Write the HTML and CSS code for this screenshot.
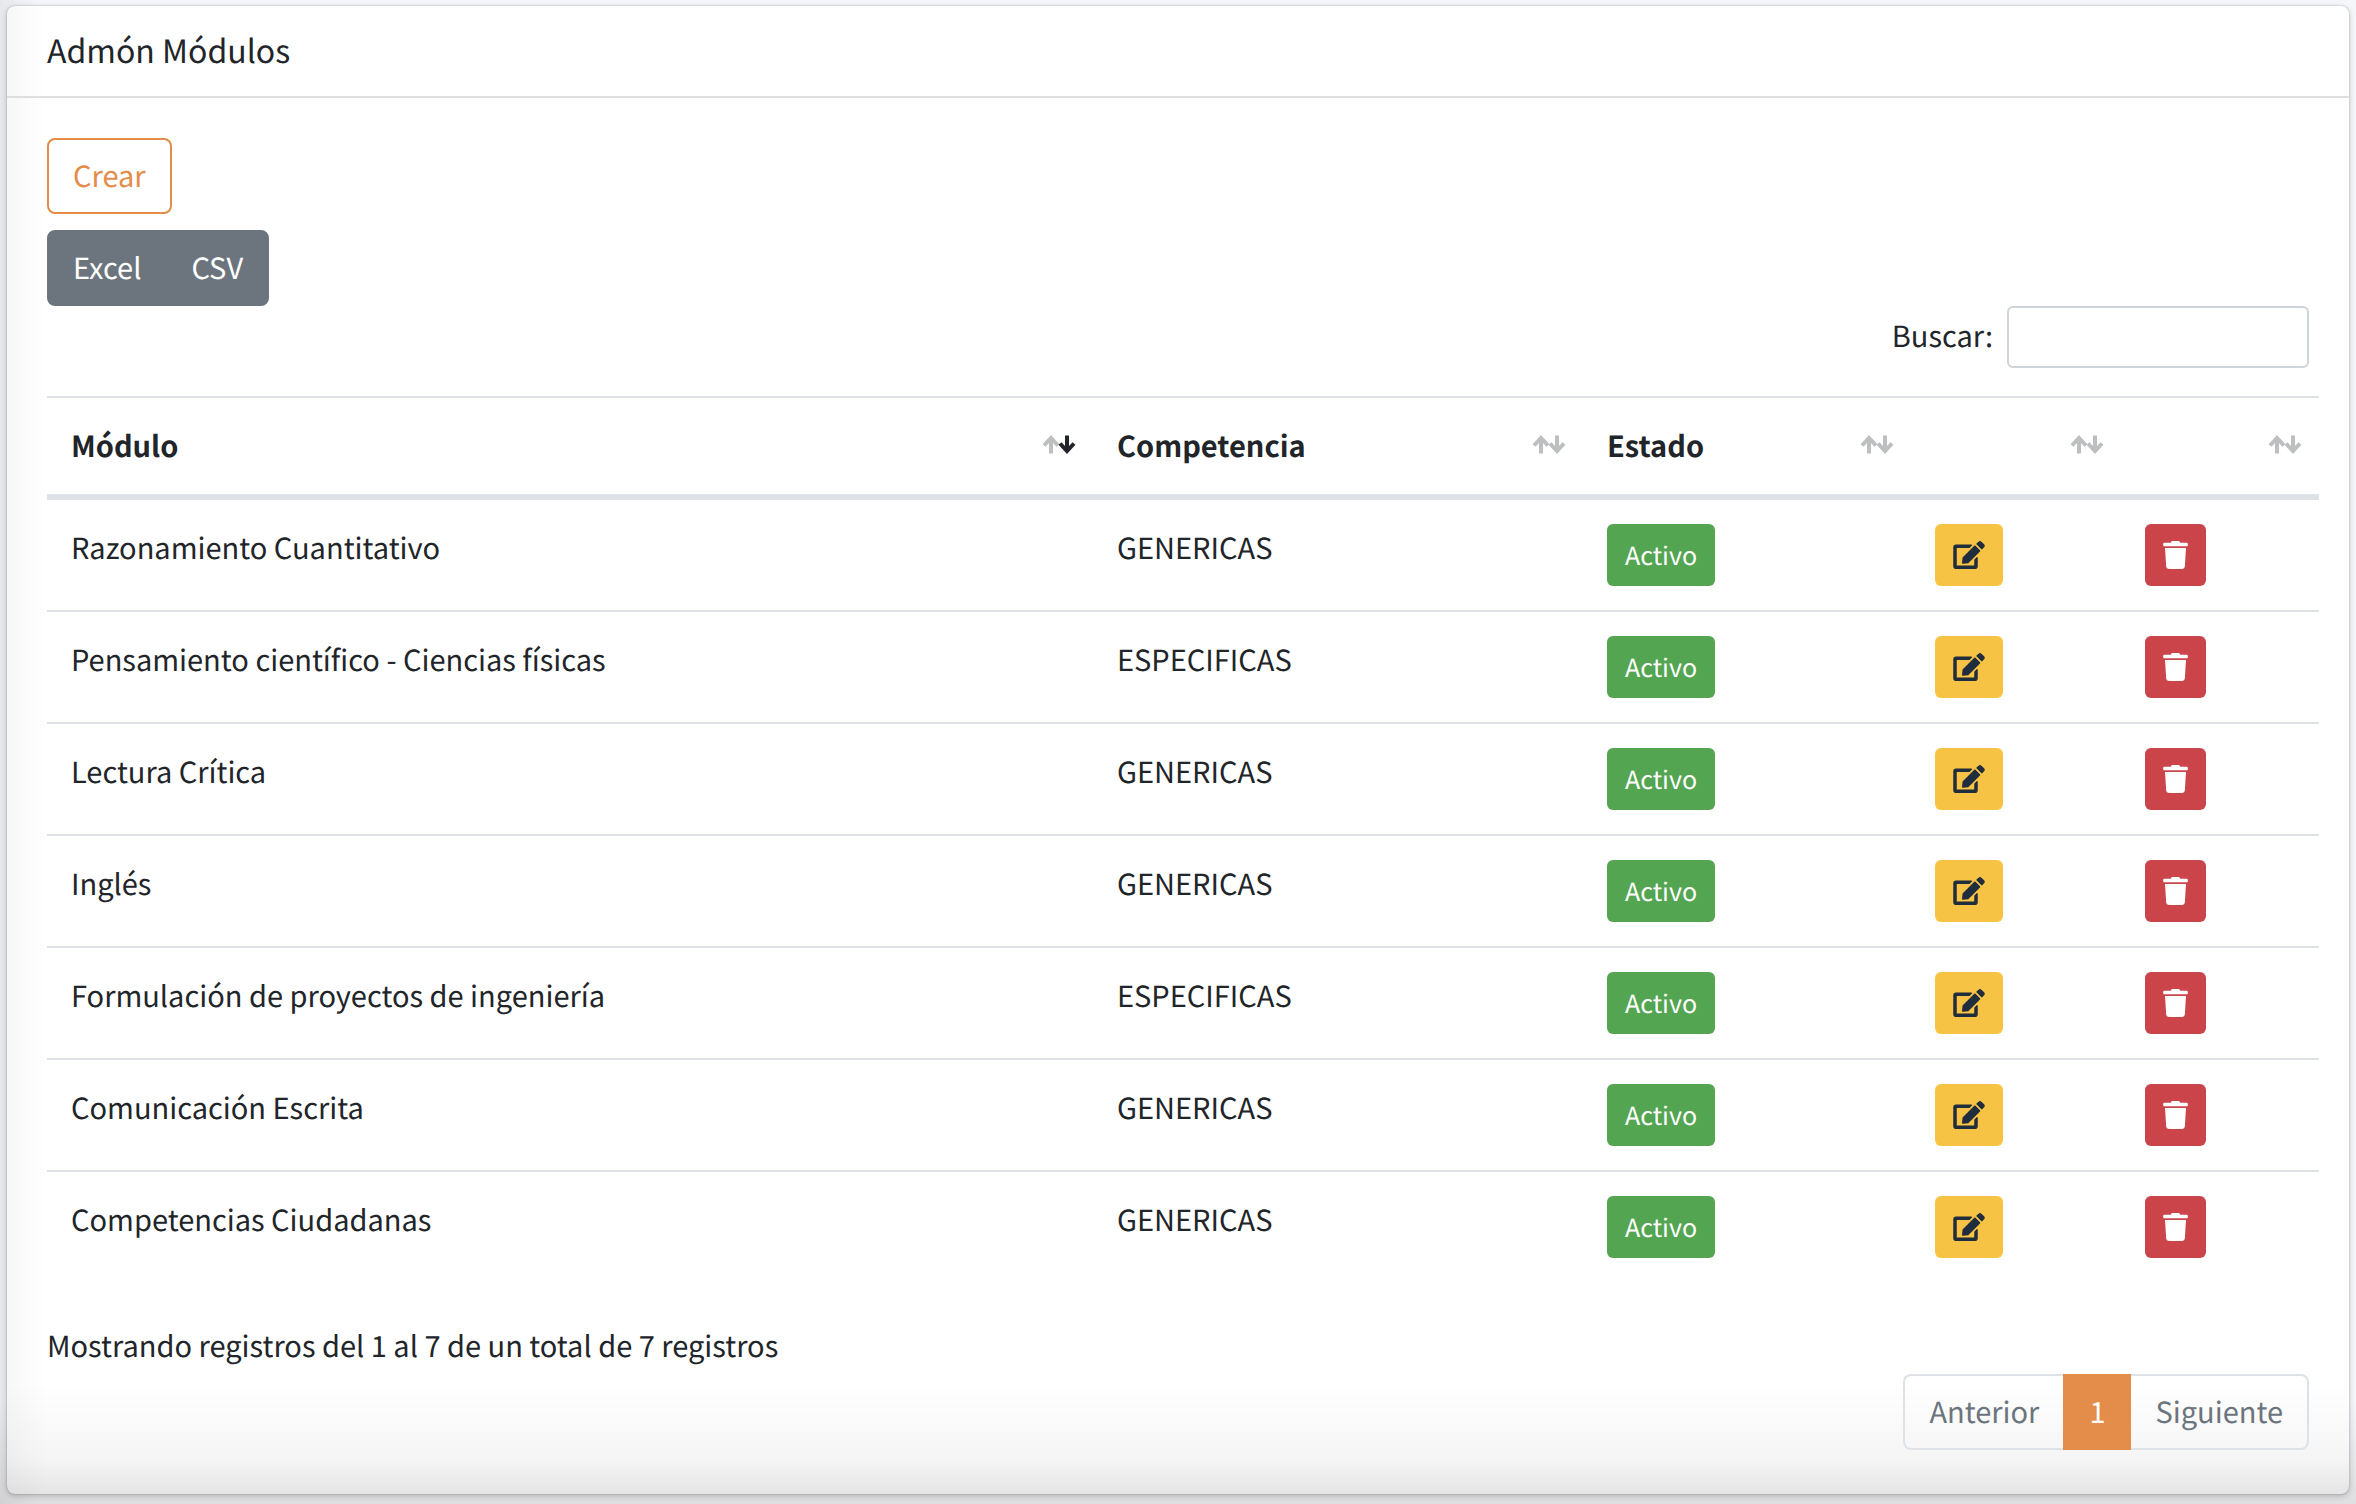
FILE: index.html
```html
<!DOCTYPE html>
<html lang="es">
<head>
<meta charset="utf-8">
<title>Admón Módulos</title>
<link rel="stylesheet" href="styles.css">
</head>
<body>
<svg class="sprite" aria-hidden="true">
  <symbol id="edit" viewBox="0 0 576 512"><path d="M402.6 83.2l90.2 90.2c3.8 3.8 3.8 10 0 13.8L274.4 405.6l-92.8 10.3c-12.4 1.4-22.9-9.1-21.5-21.5l10.3-92.8L388.8 83.2c3.8-3.8 10-3.8 13.8 0zm162-22.9l-48.8-48.8c-15.2-15.2-39.9-15.2-55.2 0l-35.4 35.4c-3.8 3.8-3.8 10 0 13.8l90.2 90.2c3.8 3.8 10 3.8 13.8 0l35.4-35.4c15.2-15.3 15.2-40 0-55.2zM384 346.2V448H64V128h229.8c3.2 0 6.2-1.3 8.5-3.5l40-40c7.6-7.6 2.2-20.5-8.5-20.5H48C21.5 64 0 85.5 0 112v352c0 26.5 21.5 48 48 48h352c26.5 0 48-21.5 48-48V306.2c0-10.7-12.9-16-20.5-8.5l-40 40c-2.2 2.3-3.5 5.3-3.5 8.5z"/></symbol>
  <symbol id="trash" viewBox="0 0 448 512"><path d="M432 32H312l-9.4-18.7A24 24 0 0 0 281.1 0H166.8a23.72 23.72 0 0 0-21.4 13.3L136 32H16A16 16 0 0 0 0 48v32a16 16 0 0 0 16 16h416a16 16 0 0 0 16-16V48a16 16 0 0 0-16-16zM53.2 467a48 48 0 0 0 47.9 45h245.8a48 48 0 0 0 47.9-45L416 128H32z"/></symbol>
  <symbol id="sort" viewBox="0 0 34 19"><path class="up" d="M9 18.500V3M2 10.500L9 3l7 7.500"/><path class="down" d="M25 .500V16M18 8.500L25 16l7-7.500"/></symbol>
</svg>
<main class="card">
  <header class="card-header"><h1 class="card-title">Admón Módulos</h1></header>
  <div class="card-body">
    <button class="btn btn-outline" type="button">Crear</button>
    <div class="btn-group">
      <button class="btn btn-secondary" type="button">Excel</button>
      <button class="btn btn-secondary" type="button">CSV</button>
    </div>
    <div class="filter">
      <label for="search">Buscar:</label>
      <input id="search" class="search" type="search">
    </div>
    <table class="table">
      <colgroup><col><col class="col-comp"><col class="col-state"><col class="col-edit"><col class="col-del"></colgroup>
      <thead>
        <tr>
          <th><div class="head">Módulo<svg class="sort sorted"><use href="#sort"/></svg></div></th>
          <th><div class="head">Competencia<svg class="sort"><use href="#sort"/></svg></div></th>
          <th><div class="head">Estado<svg class="sort"><use href="#sort"/></svg></div></th>
          <th><div class="head"><svg class="sort"><use href="#sort"/></svg></div></th>
          <th><div class="head"><svg class="sort"><use href="#sort"/></svg></div></th>
        </tr>
      </thead>
      <tbody>
        <tr><td>Razonamiento Cuantitativo</td><td>GENERICAS</td><td><button class="btn-sm success" type="button">Activo</button></td><td><button class="btn-sm warning" type="button" aria-label="Editar"><svg class="icon-edit"><use href="#edit"/></svg></button></td><td><button class="btn-sm danger" type="button" aria-label="Eliminar"><svg class="icon-trash"><use href="#trash"/></svg></button></td></tr>
        <tr><td>Pensamiento científico - Ciencias físicas</td><td>ESPECIFICAS</td><td><button class="btn-sm success" type="button">Activo</button></td><td><button class="btn-sm warning" type="button" aria-label="Editar"><svg class="icon-edit"><use href="#edit"/></svg></button></td><td><button class="btn-sm danger" type="button" aria-label="Eliminar"><svg class="icon-trash"><use href="#trash"/></svg></button></td></tr>
        <tr><td>Lectura Crítica</td><td>GENERICAS</td><td><button class="btn-sm success" type="button">Activo</button></td><td><button class="btn-sm warning" type="button" aria-label="Editar"><svg class="icon-edit"><use href="#edit"/></svg></button></td><td><button class="btn-sm danger" type="button" aria-label="Eliminar"><svg class="icon-trash"><use href="#trash"/></svg></button></td></tr>
        <tr><td>Inglés</td><td>GENERICAS</td><td><button class="btn-sm success" type="button">Activo</button></td><td><button class="btn-sm warning" type="button" aria-label="Editar"><svg class="icon-edit"><use href="#edit"/></svg></button></td><td><button class="btn-sm danger" type="button" aria-label="Eliminar"><svg class="icon-trash"><use href="#trash"/></svg></button></td></tr>
        <tr><td>Formulación de proyectos de ingeniería</td><td>ESPECIFICAS</td><td><button class="btn-sm success" type="button">Activo</button></td><td><button class="btn-sm warning" type="button" aria-label="Editar"><svg class="icon-edit"><use href="#edit"/></svg></button></td><td><button class="btn-sm danger" type="button" aria-label="Eliminar"><svg class="icon-trash"><use href="#trash"/></svg></button></td></tr>
        <tr><td>Comunicación Escrita</td><td>GENERICAS</td><td><button class="btn-sm success" type="button">Activo</button></td><td><button class="btn-sm warning" type="button" aria-label="Editar"><svg class="icon-edit"><use href="#edit"/></svg></button></td><td><button class="btn-sm danger" type="button" aria-label="Eliminar"><svg class="icon-trash"><use href="#trash"/></svg></button></td></tr>
        <tr><td>Competencias Ciudadanas</td><td>GENERICAS</td><td><button class="btn-sm success" type="button">Activo</button></td><td><button class="btn-sm warning" type="button" aria-label="Editar"><svg class="icon-edit"><use href="#edit"/></svg></button></td><td><button class="btn-sm danger" type="button" aria-label="Eliminar"><svg class="icon-trash"><use href="#trash"/></svg></button></td></tr>
      </tbody>
    </table>
    <p class="info">Mostrando registros del 1 al 7 de un total de 7 registros</p>
    <nav class="pagination" aria-label="Paginación">
      <a class="page" href="#">Anterior</a>
      <a class="page active" href="#" aria-current="page">1</a>
      <a class="page" href="#">Siguiente</a>
    </nav>
  </div>
</main>
</body>
</html>
```
FILE: styles.css
```css
* { box-sizing: border-box; }

body {
  margin: 0;
  min-height: 100vh;
  padding: 6px 7px 10px 7px;
  background:
    linear-gradient(to right, rgba(0, 0, 0, .06), rgba(0, 0, 0, 0) 40px),
    linear-gradient(to bottom, #f4f6f9 0, #f4f6f9 1400px, #dfdfe1 1500px);
  color: #212529;
  font: 29px/46px "Noto Sans CJK SC", "Noto Sans", sans-serif;
  text-rendering: geometricPrecision;
}

button, input { font: inherit; text-rendering: inherit; }

.sprite { position: absolute; width: 0; height: 0; }

.card {
  border-radius: 8px;
  background:
    linear-gradient(to right, rgba(0, 0, 0, .03), rgba(0, 0, 0, 0) 40px),
    linear-gradient(to top, rgba(0, 0, 0, .1), rgba(0, 0, 0, .04) 36px, rgba(0, 0, 0, 0) 110px),
    #fff;
  box-shadow: 0 0 2px rgba(0, 0, 0, .25), 0 2px 6px rgba(0, 0, 0, .2);
}

.card-header { padding: 21px 40px 23px; border-bottom: 2px solid #dfdfdf; }
.card-title { margin: 0; font-size: 32px; font-weight: 400; }
.card-body { padding: 40px 40px 44px; }

.btn {
  display: block;
  height: 76px;
  padding: 0 24px 2px;
  border: 2px solid #e48c49;
  border-radius: 8px;
}
.btn-outline { background: transparent; color: #e48c49; }
.btn-group { display: flex; width: fit-content; margin-top: 16px; }
.btn-secondary { border-color: #6c757d; background: #6c757d; color: #fff; }
.btn-secondary:first-child { border-radius: 8px 0 0 8px; }
.btn-secondary:last-child { margin-left: -2px; border-radius: 0 8px 8px 0; }

.filter { display: flex; justify-content: flex-end; gap: 14px; }
.filter label { padding-top: 6px; }
.search {
  width: 302px;
  height: 62px;
  padding: 8px 16px;
  border: 2px solid #ced4da;
  border-radius: 6px;
  background: #fff;
}

.table {
  width: calc(100% + 10px);
  margin-top: 28px;
  border-spacing: 0;
  table-layout: fixed;
}
.col-comp { width: 490px; }
.col-state { width: 328px; }
.col-edit { width: 210px; }
.col-del { width: 198px; }
.table th {
  padding: 24px 17px 26px 24px;
  border-top: 2px solid #dee2e6;
  border-bottom: 6px solid #dee2e6;
  text-align: left;
  font-weight: 700;
}
.table td { height: 112px; padding: 24px; border-top: 2px solid #dee2e6; vertical-align: top; }
.table tbody tr:first-child td { height: 110px; border-top: 0; }

.head { display: flex; align-items: center; height: 46px; }
.sort { width: 34px; height: 19px; margin: 0 0 2px auto; fill: none; stroke: #bcbebf; stroke-width: 4; }
.sorted { --down: #212529; }
.down { stroke: var(--down, #bcbebf); }

.btn-sm {
  display: flex;
  align-items: center;
  height: 62px;
  padding: 0 18px;
  border: 0;
  border-radius: 6px;
  font-size: 25px;
}
.success { background: #53a551; color: #fff; }
.warning { background: #f6c344; color: #1f2d3d; }
.danger { background: #cb444a; color: #fff; }
.icon-edit { width: 32px; height: 28px; fill: currentColor; }
.icon-trash { width: 25px; height: 28px; fill: currentColor; }

.info { margin: 40px 0 6px; }

.pagination { display: flex; justify-content: flex-end; }
.page {
  height: 76px;
  padding: 12px 24px;
  border: 2px solid #dee2e6;
  color: #6c757d;
  text-decoration: none;
}
.page:first-child { border-right: 0; border-radius: 8px 0 0 8px; }
.page:last-child { border-left: 0; border-radius: 0 8px 8px 0; }
.page.active { border-color: #e48c49; background: #e48c49; color: #fff; }
```
